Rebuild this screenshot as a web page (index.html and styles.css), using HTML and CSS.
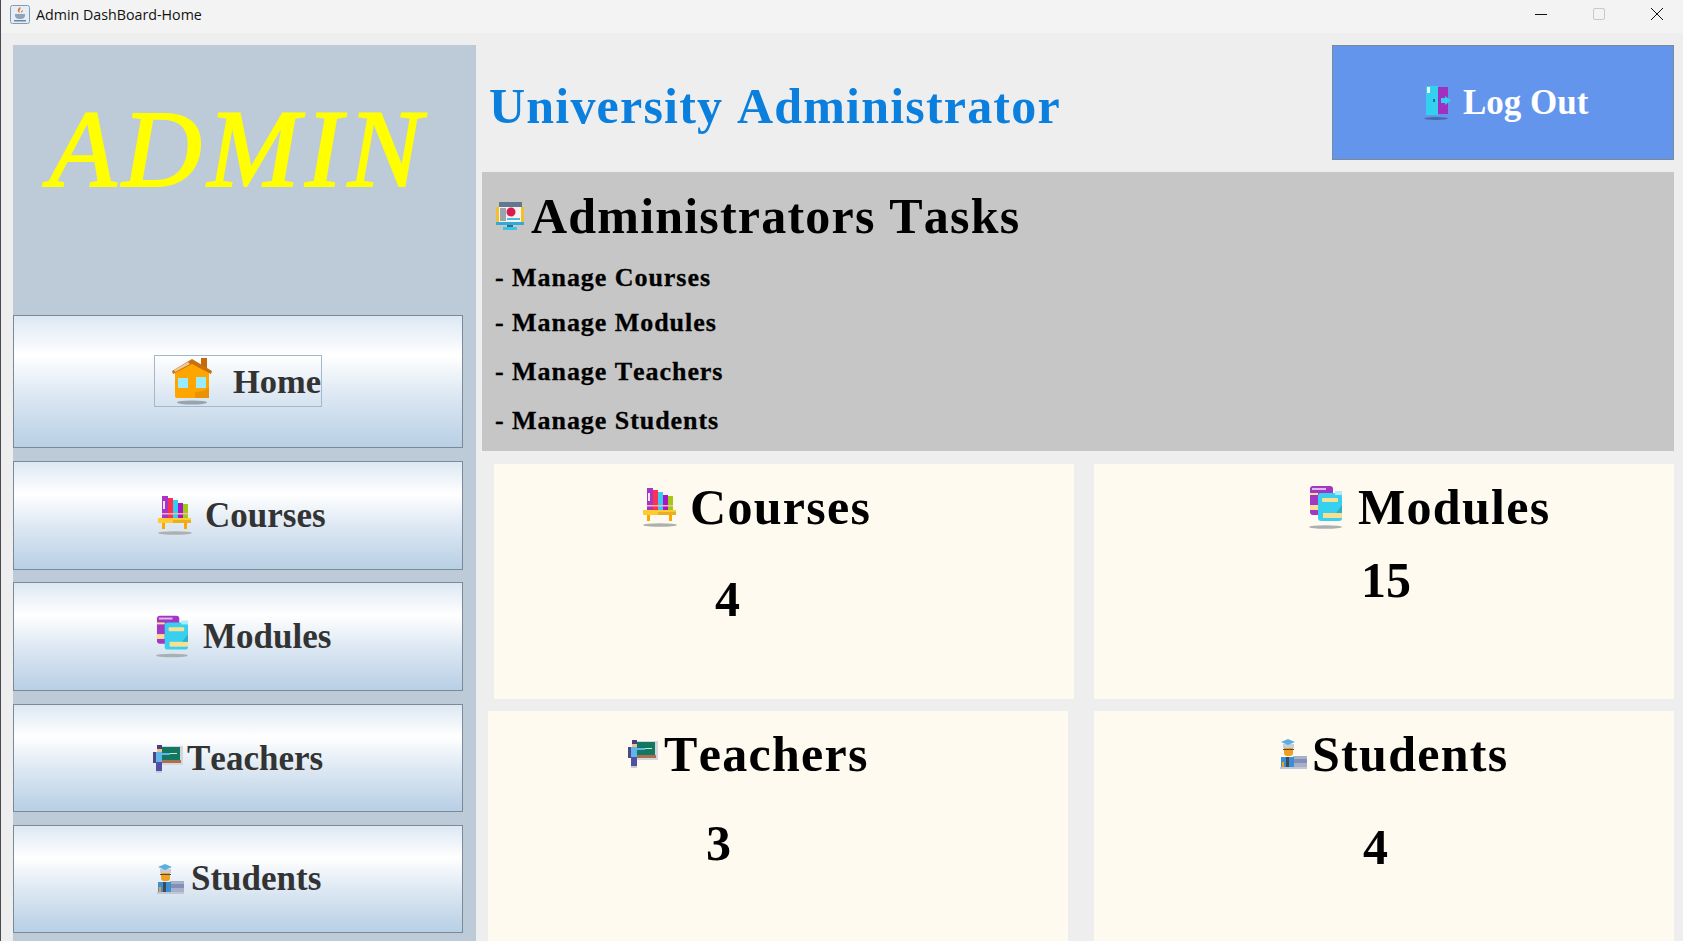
FILE: index.html
```html
<!DOCTYPE html>
<html lang="en">
<head>
<meta charset="utf-8">
<title>Admin DashBoard-Home</title>
<link rel="stylesheet" href="styles.css">
</head>
<body>
<svg class="defs" aria-hidden="true">
  <symbol id="i-house" viewBox="0 0 40 47">
    <ellipse cx="20" cy="44.5" rx="15" ry="2" fill="#9aa3ab"/>
    <rect x="29" y="0" width="6" height="10" fill="#c46a08"/>
    <path d="M3 13 20 3l17 10v25a2 2 0 0 1-2 2H5a2 2 0 0 1-2-2z" fill="#ffa500"/>
    <path d="M23 40h14V30l-6 3-8 1z" fill="#ea9203"/>
    <path d="M0 13 20 1l20 12-1 3L20 6 1 16z" fill="#c96f0c"/>
    <path d="M2 12 16 4l2 2L3 14z" fill="#f0c79a"/>
    <rect x="6" y="20" width="10" height="10" fill="#99ecff"/>
    <rect x="24" y="19" width="10" height="11" fill="#99ecff"/>
  </symbol>
  <symbol id="i-shelf" viewBox="0 0 34 39">
    <ellipse cx="17" cy="37" rx="17" ry="1.8" fill="#aeb0ae"/>
    <rect x="4" y="0" width="6" height="22" fill="#a735c8"/>
    <rect x="5" y="5" width="2" height="8" fill="#f4e8fa"/>
    <rect x="10" y="2" width="5" height="20" fill="#ff3050"/>
    <rect x="15" y="4" width="5" height="18" fill="#35cdf0"/>
    <rect x="20" y="7" width="5" height="15" fill="#a816c8"/>
    <rect x="25" y="8" width="5" height="14" fill="#a0cc10"/>
    <rect x="4" y="17" width="26" height="1.5" fill="#ffb0b0"/>
    <rect x="0" y="22" width="33" height="5" fill="#ffcc30"/>
    <rect x="15" y="24" width="18" height="3" fill="#e8b020"/>
    <rect x="4" y="27" width="3" height="6" fill="#ffa500"/>
    <rect x="26" y="27" width="3" height="6" fill="#ffa500"/>
  </symbol>
  <symbol id="i-books" viewBox="0 0 33 43">
    <ellipse cx="16.500" cy="41" rx="16.500" ry="1.800" fill="#aab0b2"/>
    <rect x="1" y="0" width="23" height="29" rx="3" fill="#a038c4"/>
    <rect x="3" y="2" width="14" height="2" fill="#e0b8ee"/>
    <rect x="1" y="7" width="8" height="2" fill="#f8e090"/>
    <rect x="1" y="19" width="8" height="5" fill="#f8e090"/>
    <rect x="9" y="7" width="24" height="28" rx="3" fill="#38d0f0"/>
    <rect x="26" y="5" width="7" height="4" fill="#b0ecf8"/>
    <rect x="13" y="12" width="16" height="4" rx="1" fill="#f8e090"/>
    <rect x="14" y="27" width="19" height="5" fill="#f8e090"/>
    <path d="M27 27l6-8v8z" fill="#2fb0c8"/>
  </symbol>
  <symbol id="i-teacher" viewBox="0 0 30 28">
    <rect x="7" y="1" width="23" height="19" fill="#d4d6dc"/>
    <rect x="9" y="2" width="18" height="13" fill="#12785f"/>
    <rect x="9" y="15" width="19" height="3" fill="#a87050"/>
    <rect x="12" y="8" width="12" height="1" fill="#c8e8d8"/>
    <rect x="0" y="7" width="4" height="11" fill="#4a4a80"/>
    <rect x="4" y="0" width="5" height="7" fill="#46407c"/>
    <rect x="4" y="4" width="5" height="3" fill="#f0c090"/>
    <rect x="3" y="7" width="6" height="10" fill="#62b4ec"/>
    <rect x="9" y="8" width="8" height="2" fill="#62b4ec"/>
    <rect x="3" y="17" width="6" height="9" fill="#5050a4"/>
    <rect x="3" y="26" width="6" height="2" fill="#c8ccd4"/>
  </symbol>
  <symbol id="i-student" viewBox="0 0 28 30">
    <rect x="1" y="28" width="27" height="2" fill="#c0c6d8"/>
    <rect x="14" y="17" width="14" height="3" fill="#a8b0c8"/>
    <rect x="13" y="20" width="15" height="4" fill="#8090b8"/>
    <rect x="14" y="24" width="14" height="4" fill="#a8b0c8"/>
    <rect x="2" y="18" width="13" height="10" fill="#3a90d0"/>
    <rect x="7" y="18" width="3" height="10" fill="#40485c"/>
    <rect x="3" y="23" width="2" height="5" fill="#f0a020"/>
    <rect x="5" y="6" width="9" height="11" rx="3" fill="#f0a020"/>
    <rect x="4" y="5" width="11" height="4" fill="#c8ccd4"/>
    <path d="M2 3 9 0l7 3-7 3z" fill="#58b0e0"/>
    <rect x="4" y="10" width="11" height="1" fill="#5a4a3a"/>
  </symbol>
  <symbol id="i-monitor" viewBox="0 0 28 28">
    <rect x="0" y="5" width="28" height="18" fill="#f0c030"/>
    <rect x="3" y="0" width="23" height="5" fill="#62788e"/>
    <rect x="3" y="5" width="22" height="15" fill="#f4f2ec"/>
    <rect x="4" y="6" width="6" height="13" fill="#9aa4ac"/>
    <circle cx="15" cy="10" r="4.500" fill="#d81a50"/>
    <rect x="11" y="16" width="13" height="2" fill="#52b8d8"/>
    <rect x="0" y="20" width="28" height="3" fill="#35a8d4"/>
    <rect x="11" y="23" width="6" height="2" fill="#2a6e90"/>
    <rect x="7" y="25" width="14" height="3" fill="#38c4ea"/>
  </symbol>
  <symbol id="i-door" viewBox="0 0 27 36">
    <ellipse cx="12" cy="33.500" rx="12" ry="1.500" fill="#476aa8"/>
    <rect x="14" y="2" width="10" height="27" fill="#a030c0"/>
    <rect x="2" y="1" width="12" height="29" fill="#33d1ef"/>
    <rect x="3" y="2" width="3" height="6" fill="#e8f8fc"/>
    <rect x="9" y="14" width="2" height="3" fill="#227088"/>
    <path d="M17 13h4v-2l6 4.500-6 4.500v-2h-4z" fill="#33d1ef"/>
  </symbol>
  <symbol id="i-java" viewBox="0 0 20 19">
    <rect x="0.500" y="0.500" width="19" height="18" rx="2" fill="#e6edf4" stroke="#7f9cb8"/>
    <path d="M10 2c2 2-2 3 0 6-3-1-3-4 0-6zM13 5c0 2-2 2-1 3-2-1-1-2 1-3z" fill="#e0762a"/>
    <path d="M5 9h10v1c0 3-2 4-5 4s-5-1-5-4z" fill="#8fa4ba"/>
    <rect x="4" y="15" width="12" height="1.500" fill="#6f87a0"/>
  </symbol>
</svg>

<div class="window">
  <header class="titlebar">
    <svg class="java-icon"><use href="#i-java"/></svg>
    <span class="title-text">Admin DashBoard-Home</span>
    <div class="controls">
      <svg class="ctl" viewBox="0 0 12 12"><path d="M0 6.500h12" stroke="#111" stroke-width="1" fill="none"/></svg>
      <svg class="ctl" viewBox="0 0 12 12"><rect x="0.500" y="0.500" width="11" height="11" rx="1.500" fill="#f3f3f3" stroke="#c8c8c8"/></svg>
      <svg class="ctl" viewBox="0 0 12 12"><path d="M0 0l12 12M12 0 0 12" stroke="#111" stroke-width="1" fill="none"/></svg>
    </div>
  </header>

  <div class="frame">
    <aside class="sidebar">
      <div class="logo">ADMIN</div>
      <nav class="nav">
        <div class="nav-btn nav-home">
          <div class="focus-box">
            <svg class="ic-house"><use href="#i-house"/></svg>
            <span>Home</span>
          </div>
        </div>
        <div class="nav-btn nav-courses">
          <svg class="ic-shelf"><use href="#i-shelf"/></svg>
          <span>Courses</span>
        </div>
        <div class="nav-btn nav-modules">
          <svg class="ic-books-n"><use href="#i-books"/></svg>
          <span>Modules</span>
        </div>
        <div class="nav-btn nav-teachers">
          <svg class="ic-teacher"><use href="#i-teacher"/></svg>
          <span>Teachers</span>
        </div>
        <div class="nav-btn nav-students">
          <svg class="ic-student"><use href="#i-student"/></svg>
          <span>Students</span>
        </div>
      </nav>
    </aside>

    <main class="main">
      <div class="top">
        <h1 class="brand">University Administrator</h1>
        <div class="logout">
          <svg class="ic-door"><use href="#i-door"/></svg>
          <span>Log Out</span>
        </div>
      </div>

      <section class="tasks">
        <h2 class="tasks-head">
          <svg class="ic-monitor"><use href="#i-monitor"/></svg>
          <span>Administrators Tasks</span>
        </h2>
        <p class="task t1">- Manage Courses</p>
        <p class="task t2">- Manage Modules</p>
        <p class="task t3">- Manage Teachers</p>
        <p class="task t4">- Manage Students</p>
      </section>

      <section class="cards">
        <article class="card card-courses">
          <h3 class="card-head">
            <svg class="ic-shelf"><use href="#i-shelf"/></svg>
            <span>Courses</span>
          </h3>
          <div class="count">4</div>
        </article>
        <article class="card card-modules">
          <h3 class="card-head">
            <svg class="ic-books"><use href="#i-books"/></svg>
            <span>Modules</span>
          </h3>
          <div class="count">15</div>
        </article>
        <article class="card card-teachers">
          <h3 class="card-head">
            <svg class="ic-teacher"><use href="#i-teacher"/></svg>
            <span>Teachers</span>
          </h3>
          <div class="count">3</div>
        </article>
        <article class="card card-students">
          <h3 class="card-head">
            <svg class="ic-student"><use href="#i-student"/></svg>
            <span>Students</span>
          </h3>
          <div class="count">4</div>
        </article>
      </section>
    </main>
  </div>
</div>
</body>
</html>
```
FILE: styles.css
```css
* { box-sizing: border-box; }
html, body { margin: 0; height: 100%; }
body {
  background: #eeeeee;
  font-family: "Liberation Serif", "Times New Roman", serif;
  font-weight: bold;
  font-kerning: none;
  overflow: hidden;
}
.defs { position: absolute; width: 0; height: 0; }
svg { display: block; flex: none; }

.window {
  height: 941px;
  display: flex;
  flex-direction: column;
  border-left: 1px solid #4a4a4e;
  overflow: hidden;
}

/* Title bar */
.titlebar {
  height: 33px;
  flex: none;
  background: #f3f3f3;
  display: flex;
  align-items: center;
  padding: 0 0 5px 9px;
  font-family: "Open Sans", "Noto Sans", sans-serif;
  font-kerning: normal;
  font-weight: normal;
  font-size: 14.25px;
  color: #111;
}
.java-icon { width: 20px; height: 19px; margin-right: 6px; }
.title-text { white-space: nowrap; }
.controls { margin-left: auto; display: flex; gap: 46px; padding-right: 20px; }
.ctl { width: 12px; height: 12px; }

/* Frame */
.frame {
  flex: 1;
  display: flex;
  padding: 12px 9px 0 12px;
  min-height: 0;
}

/* Sidebar */
.sidebar {
  width: 463px;
  flex: none;
  background: #bdcbd9;
}
.logo {
  height: 270px;
  padding: 39px 0 0 36px;
  font-style: italic;
  font-weight: normal;
  font-size: 110px;
  line-height: 130px;
  letter-spacing: 6px;
  color: #ffff00;
  -webkit-text-stroke: 2px #ffff00;
  white-space: nowrap;
}
.nav {
  width: 450px;
  display: flex;
  flex-direction: column;
  gap: 13px;
}
.nav-btn {
  height: 108px;
  border: 1px solid #7a8a99;
  background: linear-gradient(180deg, #dde8f3 0%, #ffffff 30%, #dde8f3 60%, #b8cfe5 100%);
  display: flex;
  align-items: center;
  font-size: 35px;
  color: #333333;
  white-space: nowrap;
}
.nav-home { height: 133px; padding: 0 0 2px 140px; }
.nav-courses { height: 109px; margin-bottom: -1px; padding-left: 144px; gap: 13px; }
.nav-modules { height: 109px; padding-left: 142px; gap: 15px; }
.nav-teachers { padding: 1px 0 0 139px; gap: 4px; }
.nav-students { padding-left: 142px; gap: 7px; }

.focus-box {
  width: 168px;
  height: 52px;
  border: 1px solid #a3b8cc;
  display: flex;
  align-items: center;
  padding: 2px 0 0 17px;
  gap: 21px;
  font-size: 34.5px;
}
.ic-house { width: 40px; height: 47px; }
.ic-shelf { width: 34px; height: 39px; }
.ic-books-n { width: 32px; height: 43px; }
.ic-books { width: 33px; height: 43px; }
.ic-teacher { width: 30px; height: 28px; }
.ic-student { width: 28px; height: 30px; }
.ic-door { width: 27px; height: 36px; }
.ic-monitor { width: 28px; height: 28px; }

/* Main */
.main { flex: 1; min-width: 0; }
.top {
  height: 115px;
  display: flex;
  align-items: stretch;
  justify-content: space-between;
}
.brand {
  margin: 0;
  padding: 32px 0 0 13px;
  font-size: 50px;
  line-height: 58px;
  letter-spacing: 1.2px;
  color: #0a7fdd;
  white-space: nowrap;
}
.logout {
  width: 342px;
  background: #6495ed;
  border: 1px solid #7a8a99;
  display: flex;
  align-items: center;
  padding-left: 91px;
  gap: 12px;
  font-size: 35px;
  color: #ffffff;
}

.tasks {
  margin: 12px 0 0 6px;
  height: 279px;
  background: #c6c6c6;
  color: #000;
  padding: 15px 0 0 14px;
}
.tasks-head {
  margin: 0;
  display: flex;
  align-items: center;
  gap: 7px;
  font-size: 50px;
  line-height: 58px;
  letter-spacing: 1.2px;
}
.task {
  margin: 0 0 0 -1px;
  font-size: 26px;
  line-height: 30px;
  letter-spacing: 0.95px;
  -webkit-text-stroke: 0.3px #000;
}
.t1 { margin-top: 18px; }
.t2 { margin-top: 15px; }
.t3 { margin-top: 19px; }
.t4 { margin-top: 19px; }

.cards {
  margin: 13px 0 0 12px;
  display: grid;
  grid-template-columns: 586px 580px;
  grid-template-rows: 235px 230px;
  column-gap: 20px;
  row-gap: 12px;
  color: #000;
}
.card { background: #fffaf0; }
.card-courses { margin-left: 6px; padding: 14px 0 0 149px; }
.card-modules { padding: 14px 0 0 215px; }
.card-teachers { margin-right: 6px; padding: 14px 0 0 140px; }
.card-students { padding: 14px 0 0 185px; }
.card-head {
  margin: 0;
  display: flex;
  align-items: center;
  font-size: 50px;
  line-height: 58px;
  letter-spacing: 1.3px;
  white-space: nowrap;
}
.card-courses .card-head { gap: 13px; }
.card-modules .card-head { gap: 16px; }
.card-teachers .card-head { gap: 6px; }
.card-students .card-head { gap: 5px; }
.count { font-size: 50px; line-height: 58px; }
.card-courses .count { margin: 34px 0 0 72px; }
.card-modules .count { margin: 15px 0 0 52px; }
.card-teachers .count { margin: 31px 0 0 78px; }
.card-students .count { margin: 35px 0 0 84px; }
```
